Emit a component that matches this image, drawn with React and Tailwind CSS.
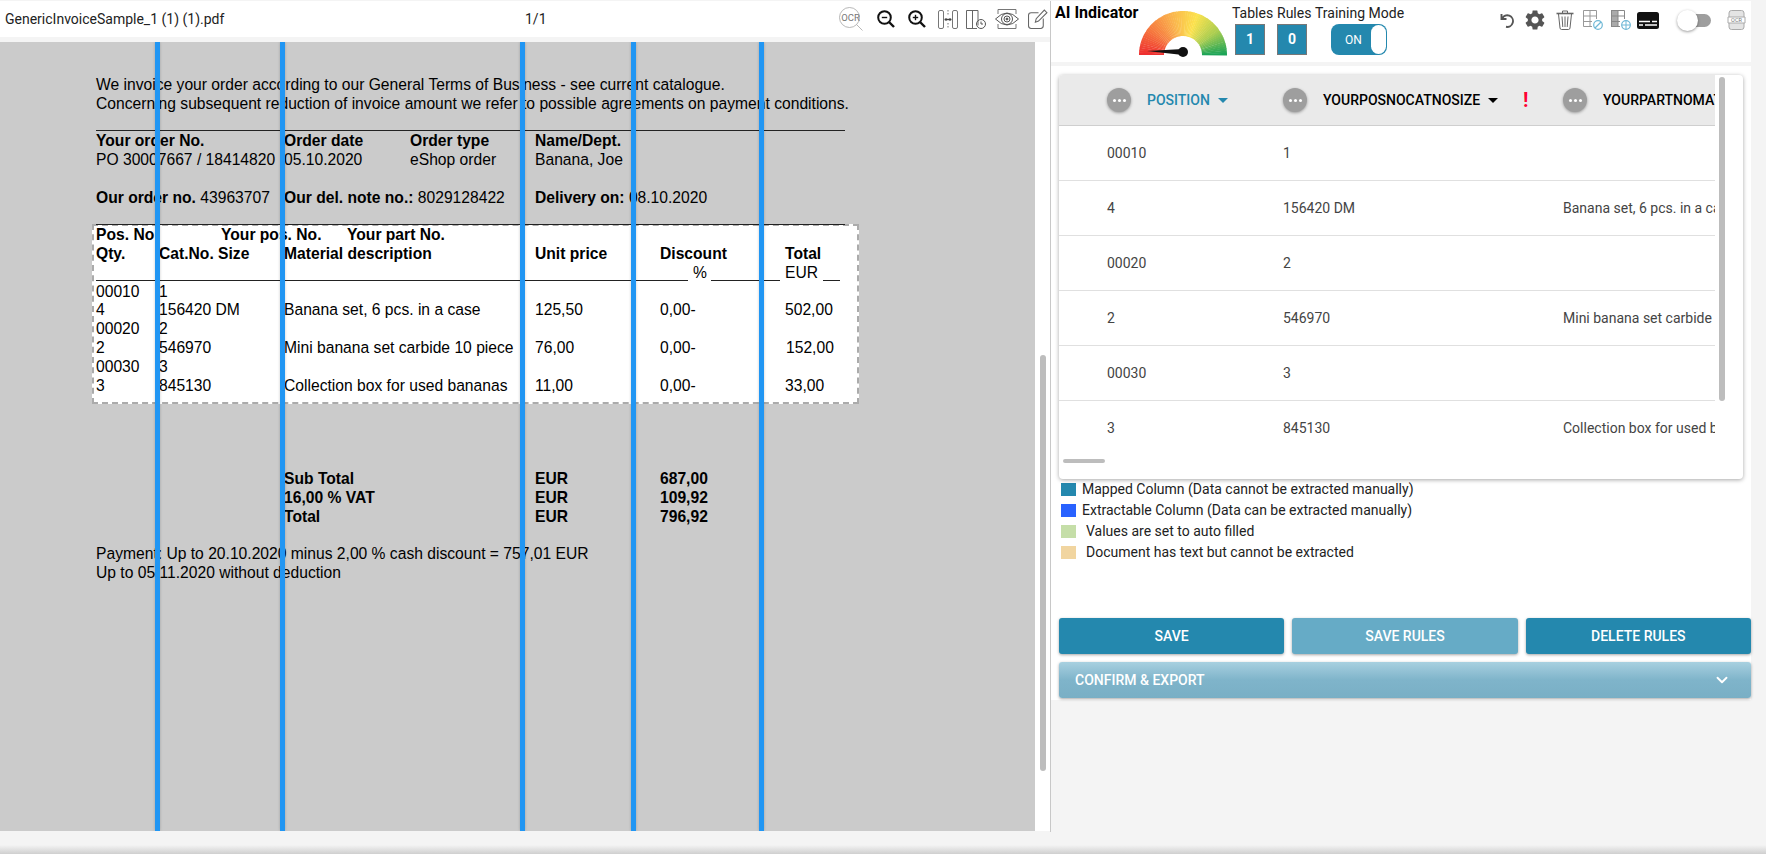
import { ChevronDown } from 'lucide-react';
import { MdSettings } from 'react-icons/md';

const PDF = "font-['Liberation_Sans',Arial,sans-serif]";

// text layer of the pdf page, positions are relative to the page canvas
const pdfText = [
  ['left-[96px] top-[34px]', 'We invoice your order according to our General Terms of Business - see current catalogue.'],
  ['left-[96px] top-[53px]', 'Concerning subsequent reduction of invoice amount we refer to possible agreements on payment conditions.'],
  ['left-[96px] top-[90px] font-bold', 'Your order No.'],
  ['left-[284px] top-[90px] font-bold', 'Order date'],
  ['left-[410px] top-[90px] font-bold', 'Order type'],
  ['left-[535px] top-[90px] font-bold', 'Name/Dept.'],
  ['left-[96px] top-[109px]', 'PO 30007667 / 18414820'],
  ['left-[284px] top-[109px]', '05.10.2020'],
  ['left-[410px] top-[109px]', 'eShop order'],
  ['left-[535px] top-[109px]', 'Banana, Joe'],
  ['left-[96px] top-[147px]', <><b>Our order no.</b> 43963707</>],
  ['left-[284px] top-[147px]', <><b>Our del. note no.:</b> 8029128422</>],
  ['left-[535px] top-[147px]', <><b>Delivery on:</b> 08.10.2020</>],
  ['left-[96px] top-[184px] font-bold', 'Pos. No'],
  ['left-[221px] top-[184px] font-bold', 'Your pos. No.'],
  ['left-[347px] top-[184px] font-bold', 'Your part No.'],
  ['left-[96px] top-[203px] font-bold', 'Qty.'],
  ['left-[159px] top-[203px] font-bold', 'Cat.No. Size'],
  ['left-[284px] top-[203px] font-bold', 'Material description'],
  ['left-[535px] top-[203px] font-bold', 'Unit price'],
  ['left-[660px] top-[203px] font-bold', 'Discount'],
  ['left-[785px] top-[203px] font-bold', 'Total'],
  ['left-[693px] top-[222px]', '%'],
  ['left-[785px] top-[222px]', 'EUR'],
  ['left-[96px] top-[241px]', '00010'],
  ['left-[159px] top-[241px]', '1'],
  ['left-[96px] top-[259px]', '4'],
  ['left-[159px] top-[259px]', '156420 DM'],
  ['left-[284px] top-[259px]', 'Banana set, 6 pcs. in a case'],
  ['left-[535px] top-[259px]', '125,50'],
  ['left-[660px] top-[259px]', '0,00-'],
  ['left-[785px] top-[259px]', '502,00'],
  ['left-[96px] top-[278px]', '00020'],
  ['left-[159px] top-[278px]', '2'],
  ['left-[96px] top-[297px]', '2'],
  ['left-[159px] top-[297px]', '546970'],
  ['left-[284px] top-[297px]', 'Mini banana set carbide 10 piece'],
  ['left-[535px] top-[297px]', '76,00'],
  ['left-[660px] top-[297px]', '0,00-'],
  ['left-[786px] top-[297px]', '152,00'],
  ['left-[96px] top-[316px]', '00030'],
  ['left-[159px] top-[316px]', '3'],
  ['left-[96px] top-[335px]', '3'],
  ['left-[159px] top-[335px]', '845130'],
  ['left-[284px] top-[335px]', 'Collection box for used bananas'],
  ['left-[535px] top-[335px]', '11,00'],
  ['left-[660px] top-[335px]', '0,00-'],
  ['left-[785px] top-[335px]', '33,00'],
  ['left-[284px] top-[428px] font-bold', 'Sub Total'],
  ['left-[535px] top-[428px] font-bold', 'EUR'],
  ['left-[660px] top-[428px] font-bold', '687,00'],
  ['left-[284px] top-[447px] font-bold', '16,00 % VAT'],
  ['left-[535px] top-[447px] font-bold', 'EUR'],
  ['left-[660px] top-[447px] font-bold', '109,92'],
  ['left-[284px] top-[466px] font-bold', 'Total'],
  ['left-[535px] top-[466px] font-bold', 'EUR'],
  ['left-[660px] top-[466px] font-bold', '796,92'],
  ['left-[96px] top-[503px]', 'Payment: Up to 20.10.2020 minus 2,00 % cash discount = 757,01 EUR'],
  ['left-[96px] top-[522px]', 'Up to 05.11.2020 without deduction'],
];

const pdfRules = [
  'left-[96px] top-[88px] w-[749px]',
  'left-[96px] top-[182px] w-[749px]',
  'left-[96px] top-[238px] w-[592px]',
  'left-[711px] top-[238px] w-[69px]',
  'left-[823px] top-[238px] w-[17px]',
];

const columnLines = ['left-[155px]', 'left-[280px]', 'left-[520px]', 'left-[631px]', 'left-[759px]'];

const rows = [
  ['00010', '1', ''],
  ['4', '156420 DM', 'Banana set, 6 pcs. in a case'],
  ['00020', '2', ''],
  ['2', '546970', 'Mini banana set carbide 10 piece'],
  ['00030', '3', ''],
  ['3', '845130', 'Collection box for used bananas'],
];

const legend = [
  ['bg-[#2488ae]', 'ml-[6px]', 'Mapped Column (Data cannot be extracted manually)'],
  ['bg-[#2962ff]', 'ml-[6px]', 'Extractable Column (Data can be extracted manually)'],
  ['bg-[#c5dea8]', 'ml-[10px]', 'Values are set to auto filled'],
  ['bg-[#f1d5a0]', 'ml-[10px]', 'Document has text but cannot be extracted'],
];

function lerp(a, b, t) {
  return a.map((v, i) => Math.round(v + (b[i] - v) * t));
}

const gaugeStops = [[238, 48, 48], [246, 120, 62], [250, 180, 78], [252, 226, 78], [170, 205, 80], [16, 160, 88]];

function Gauge() {
  const n = 60;
  const segs = [];
  for (let i = 0; i < n; i++) {
    const a0 = Math.PI - (Math.PI * i) / n;
    const a1 = Math.PI - (Math.PI * (i + 1.2)) / n;
    const p = (i / n) * (gaugeStops.length - 1);
    const k = Math.floor(p);
    const c = lerp(gaugeStops[k], gaugeStops[Math.min(k + 1, gaugeStops.length - 1)], p - k);
    const pt = (r, a) => `${(44 + r * Math.cos(a)).toFixed(2)} ${(45 - r * Math.sin(a)).toFixed(2)}`;
    segs.push(
      <path key={i} fill={`rgb(${c.join(',')})`}
        d={`M${pt(44, a0)} A44 44 0 0 1 ${pt(44, a1)} L${pt(19, a1)} A19 19 0 0 0 ${pt(19, a0)} Z`} />
    );
  }
  return (
    <svg width="88" height="48" viewBox="0 0 88 48" className="shrink-0">
      {segs}
      <path d="M8 41 L44 39 Q50 42 44 45 Z" fill="#111" />
      <circle cx="44" cy="42" r="5" fill="#111" />
    </svg>
  );
}

function OcrIcon() {
  return (
    <svg width="24" height="24" viewBox="0 0 24 24" fill="none" stroke="#a5a5a5" strokeWidth="0.8" className="shrink-0">
      <circle cx="10.5" cy="10.5" r="10" />
      <path d="M17.5 17.5 L23.5 23.5" />
      <text x="11.5" y="13.5" textAnchor="middle" fontSize="9.5" fill="#777" stroke="none" fontFamily="Roboto, sans-serif">OCR</text>
    </svg>
  );
}

function Lens({ plus }) {
  return (
    <svg width="18" height="18" viewBox="0 0 18 18" fill="none" stroke="#111" strokeWidth="2" className="shrink-0">
      <circle cx="7.5" cy="7.5" r="6.3" />
      <path d="M12 12 L17 17" strokeWidth="2.4" />
      <path d="M4.8 7.5 H10.2" strokeWidth="1.4" />
      {plus && <path d="M7.5 4.8 V10.2" strokeWidth="1.4" />}
    </svg>
  );
}

function ColWidthIcon() {
  return (
    <svg width="20" height="19" viewBox="0 0 20 19" fill="none" stroke="#777" strokeWidth="1" className="shrink-0">
      <rect x="0.5" y="0.5" width="5" height="18" rx="1.5" />
      <rect x="14.5" y="0.5" width="5" height="18" rx="1.5" />
      <path d="M10 0 V6 M10 13 V19" strokeDasharray="1.5 1.5" />
      <path d="M6.5 9.5 H13.5" stroke="#444" strokeWidth="1.4" />
      <path d="M8 8 V11 M12 8 V11" stroke="#444" />
    </svg>
  );
}

function ColClockIcon() {
  return (
    <svg width="20" height="19" viewBox="0 0 20 19" fill="none" stroke="#666" strokeWidth="1" className="shrink-0">
      <path d="M12 15.5 V0.5 H0.5 V18.5 H11" />
      <path d="M6.5 0.5 V18.5" />
      <circle cx="15" cy="14" r="4.5" stroke="#555" />
      <path d="M15 11.5 V14 H17" stroke="#555" />
    </svg>
  );
}

function EyeIcon() {
  return (
    <svg width="24" height="20" viewBox="0 0 24 20" fill="none" stroke="#555" strokeWidth="1" className="shrink-0">
      <path d="M3 0.5 H21 M3 19.5 H21 M3 0.5 V5 M21 0.5 V5 M3 15 V19.5 M21 15 V19.5" stroke="#777" />
      <path d="M0.5 10 Q12 -2 23.5 10 Q12 22 0.5 10 Z" fill="#fff" />
      <circle cx="12" cy="10" r="5.5" />
      <circle cx="12" cy="10" r="3" />
      <circle cx="12" cy="10" r="1" fill="#555" />
    </svg>
  );
}

function EditIcon() {
  return (
    <svg width="20" height="20" viewBox="0 0 19 19" fill="none" stroke="#666" strokeWidth="1" className="shrink-0">
      <path d="M10 3.5 H3 Q0.5 3.5 0.5 6 V16 Q0.5 18.5 3 18.5 H12 Q14.5 18.5 14.5 16 V9" />
      <path d="M7 12.5 L7.8 9.2 L15.5 1 L18 3.5 L10 11.5 Z" />
    </svg>
  );
}

function UndoIcon() {
  return (
    <svg width="15" height="15" viewBox="0 0 15 15" fill="none" stroke="#555" strokeWidth="1.9" className="shrink-0">
      <path d="M1.5 1 V6 H6.5" />
      <path d="M2 5.5 A5.8 5.8 0 1 1 6 13.8" />
    </svg>
  );
}

function TrashIcon() {
  return (
    <svg width="18" height="20" viewBox="0 0 18 20" fill="none" stroke="#666" strokeWidth="1" className="shrink-0">
      <path d="M0.5 3.5 H17.5" strokeWidth="1.6" />
      <path d="M6.5 3 V1 H11.5 V3" />
      <path d="M2.5 4 L4 18 Q4.2 19.5 5.5 19.5 H12.5 Q13.8 19.5 14 18 L15.5 4" />
      <path d="M6 6.5 L6.8 17 M9 6.5 V17 M12 6.5 L11.2 17" />
    </svg>
  );
}

function TableBanIcon() {
  return (
    <svg width="20" height="20" viewBox="0 0 20 20" fill="none" stroke="#999" strokeWidth="1" className="shrink-0">
      <path d="M0.5 0.5 H13.5 V9 M0.5 0.5 V16.5 H9 M0.5 6 H13.5 M0.5 11.5 H9 M7 0.5 V16.5" />
      <circle cx="15" cy="15" r="4.3" stroke="#6fb8d6" strokeWidth="1.2" />
      <path d="M12 18 L18 12" stroke="#6fb8d6" strokeWidth="1.2" />
    </svg>
  );
}

function TablePlusIcon() {
  return (
    <svg width="20" height="20" viewBox="0 0 20 20" fill="none" stroke="#888" strokeWidth="1" className="shrink-0">
      <rect x="0.5" y="0.5" width="6.5" height="16" fill="#aaa" />
      <path d="M7 0.5 H13.5 V9 M7 6 H13.5 M0.5 6 H7 M0.5 11.5 H9 M7 16.5 H9" />
      <circle cx="15" cy="15" r="4.3" stroke="#6fb8d6" strokeWidth="1.2" />
      <path d="M10.7 15 H19.3 M15 10.7 V19.3" stroke="#6fb8d6" />
    </svg>
  );
}

function CaptionIcon() {
  return (
    <svg width="22" height="17" viewBox="0 0 22 17" className="shrink-0">
      <rect width="22" height="17" rx="2.5" fill="#111" />
      <path d="M2 9.5 H13 M15 9.5 H20 M2 13 H6 M8 13 H20" stroke="#fff" strokeWidth="1.6" />
    </svg>
  );
}

function OcrBoxIcon() {
  return (
    <svg width="19" height="20" viewBox="0 0 18 20" fill="none" stroke="#aaa" strokeWidth="1" className="shrink-0">
      <rect x="1.5" y="0.5" width="15" height="19" rx="2.5" fill="#e4e4e4" />
      <path d="M0.5 7 H17.5 V13 H0.5 Z" fill="#fff" />
      <text x="9" y="12" textAnchor="middle" fontSize="5.5" fill="#777" stroke="none" fontFamily="Roboto, sans-serif">OCR</text>
    </svg>
  );
}

function Caret({ className }) {
  return (
    <svg width="10" height="5" viewBox="0 0 10 5" className={`shrink-0 ${className}`}>
      <path d="M0 0 H10 L5 5 Z" fill="currentColor" />
    </svg>
  );
}

function MenuDot() {
  return (
    <span className="flex h-6 w-6 shrink-0 items-center justify-center gap-[2px] rounded-full bg-[#9e9e9e] shadow-[0_1px_3px_rgba(0,0,0,0.35)]">
      <i className="h-[3px] w-[3px] rounded-full bg-white" />
      <i className="h-[3px] w-[3px] rounded-full bg-white" />
      <i className="h-[3px] w-[3px] rounded-full bg-white" />
    </span>
  );
}

function PdfPanel() {
  return (
    <div className="flex h-[831px] w-[1051px] shrink-0 flex-col border-r border-[#c8c8c8]">
      {/* toolbar */}
      <div className="flex h-9 items-center bg-white text-[14px] text-[#222]">
        <span className="w-[524px] shrink-0 pl-[5px]">GenericInvoiceSample_1 (1) (1).pdf</span>
        <span className="w-[315px] shrink-0 pl-px">1/1</span>
        <OcrIcon />
        <span className="ml-[14px]"><Lens /></span>
        <span className="ml-[13px]"><Lens plus /></span>
        <span className="ml-3"><ColWidthIcon /></span>
        <span className="ml-2"><ColClockIcon /></span>
        <span className="ml-[9px]"><EyeIcon /></span>
        <span className="ml-[9px]"><EditIcon /></span>
      </div>
      <div className="mt-[5px] flex h-[789px]">
        <div className={`relative h-full w-[1035px] shrink-0 overflow-hidden bg-[#cbcbcb] text-[15.65px] leading-[18px] text-black ${PDF}`}>
          <div className="absolute left-[92px] top-[182px] h-[180px] w-[767px] border-2 border-dashed border-[#ababab] bg-white" />
          {pdfRules.map((r) => <div key={r} className={`absolute h-px bg-[#222] ${r}`} />)}
          {pdfText.map(([pos, t], i) => (
            <span key={i} className={`absolute whitespace-nowrap ${pos}`}>{t}</span>
          ))}
          {columnLines.map((c) => (
            <div key={c} className={`absolute top-0 h-full w-[5px] bg-[#2196f3] shadow-[0_0_3px_rgba(0,0,0,0.2)] ${c}`} />
          ))}
        </div>
        <div className="flex-1 bg-white pl-[5px]">
          <div className="mt-[313px] h-[416px] w-[6px] rounded-full bg-[#bdbdbd]" />
        </div>
      </div>
    </div>
  );
}

function RightHeader() {
  return (
    <div className="flex h-[61px] w-[700px] items-start bg-white pl-1 text-[14px] text-[#222]">
      <span className="w-[84px] shrink-0 whitespace-nowrap text-[16px] font-bold leading-6 text-black">AI Indicator</span>
      <div className="mt-[9px] shrink-0"><Gauge /></div>
      <div className="ml-[5px] flex shrink-0 flex-col">
        <div className="flex h-[23px] items-center whitespace-nowrap leading-6">
          <span className="w-[45px]">Tables</span>
          <span className="w-[38px]">Rules</span>
          <span>Training Mode</span>
        </div>
        <div className="flex">
          <span className="ml-[3px] flex h-[31px] w-[30px] items-center justify-center border border-[#777] bg-[#2488ae] font-bold text-white">1</span>
          <span className="ml-3 flex h-[31px] w-[30px] items-center justify-center border border-[#777] bg-[#2488ae] font-bold text-white">0</span>
          <span className="ml-6 flex h-[31px] w-[56px] items-center justify-between rounded-lg bg-[#2488ae] pl-[14px] pr-px text-[12px] text-white">
            ON
            <i className="h-[29px] w-[15px] rounded-full bg-white" />
          </span>
        </div>
      </div>
      <div className="ml-[96px] mt-2 flex h-[22px] shrink-0 items-center">
        <UndoIcon />
        <MdSettings className="ml-[8px] shrink-0 text-[#555]" size={24} />
        <span className="ml-[9px]"><TrashIcon /></span>
        <span className="ml-[9px]"><TableBanIcon /></span>
        <span className="ml-2"><TablePlusIcon /></span>
        <span className="ml-[6px]"><CaptionIcon /></span>
        <div className="relative ml-[28px] h-[13px] w-6 shrink-0 rounded-full bg-[#9e9e9e]">
          <span className="absolute -left-[10px] -top-1 h-[21px] w-[21px] rounded-full bg-white shadow-[0_1px_3px_rgba(0,0,0,0.4)]" />
        </div>
        <span className="ml-[16px]"><OcrBoxIcon /></span>
      </div>
    </div>
  );
}

function MappingTable() {
  return (
    <div className="relative mt-[9px] flex h-[404px] w-[684px] flex-col overflow-hidden rounded bg-white text-[14px] shadow-[0_1px_4px_rgba(0,0,0,0.35)]">
      <div className="w-[656px] overflow-hidden">
        <div className="flex h-[51px] w-[800px] items-center border-b border-[#cfcfcf] bg-[#eaeaea] pl-12 font-medium">
          <div className="flex w-[176px] shrink-0 items-center">
            <MenuDot />
            <span className="ml-4 text-[#2488ae]">POSITION</span>
            <Caret className="ml-2 text-[#2488ae]" />
          </div>
          <div className="flex w-[280px] shrink-0 items-center text-black">
            <MenuDot />
            <span className="ml-4">YOURPOSNOCATNOSIZE</span>
            <Caret className="ml-2" />
            <span className="ml-[25px] text-[20px] font-bold leading-none text-[#ff0033]">!</span>
          </div>
          <div className="flex items-center text-black">
            <MenuDot />
            <span className="ml-4 whitespace-nowrap">YOURPARTNOMATERIAL</span>
          </div>
        </div>
        {rows.map((r, i) => (
          <div key={i} className="flex h-[55px] w-[800px] items-center border-b border-[#e0e0e0] pl-12 text-[#444] last:border-b-0">
            <span className="w-[176px] shrink-0">{r[0]}</span>
            <span className="w-[280px] shrink-0">{r[1]}</span>
            <span className="whitespace-nowrap">{r[2]}</span>
          </div>
        ))}
      </div>
      <div className="absolute right-[18px] top-[2px] h-[324px] w-[6px] rounded-full bg-[#bdbdbd]" />
      <div className="absolute bottom-[16px] left-[4px] h-1 w-[42px] rounded-full bg-[#bdbdbd]" />
    </div>
  );
}

function RightPanel() {
  return (
    <div className="flex flex-col font-['Roboto',sans-serif]">
      <RightHeader />
      <div className="mt-1 h-[634px] w-[700px] bg-white pl-2">
        <MappingTable />
        <div className="ml-[2px] flex flex-col text-[14px] text-[#222]">
          {legend.map(([swatch, gap, label]) => (
            <div key={label} className="flex h-[21px] items-center">
              <i className={`h-[13px] w-[15px] shrink-0 ${swatch}`} />
              <span className={gap}>{label}</span>
            </div>
          ))}
        </div>
        <div className="mt-[55px] flex w-[692px] gap-2 text-[14px] font-medium text-white">
          <button className="h-9 flex-1 rounded-[3px] bg-[#2488ae] shadow-[0_1px_3px_rgba(0,0,0,0.35)]">SAVE</button>
          <button className="h-9 flex-1 rounded-[3px] bg-[#66abc6] shadow-[0_1px_3px_rgba(0,0,0,0.35)]">SAVE RULES</button>
          <button className="h-9 flex-1 rounded-[3px] bg-[#2488ae] shadow-[0_1px_3px_rgba(0,0,0,0.35)]">DELETE RULES</button>
        </div>
        <div className="mt-2 flex h-9 w-[692px] items-center justify-between rounded-[3px] bg-[linear-gradient(#a8d0e0,#7fb4ca_50%,#79afc5)] pl-4 pr-5 text-[14px] font-medium text-white shadow-[0_1px_3px_rgba(0,0,0,0.35)]">
          CONFIRM &amp; EXPORT
          <ChevronDown size={18} strokeWidth={2.5} />
        </div>
      </div>
    </div>
  );
}

export default function App() {
  return (
    <div className="flex h-[854px] w-full flex-col overflow-hidden bg-[#f4f4f4] pt-px font-['Roboto',sans-serif]">
      <div className="flex">
        <PdfPanel />
        <RightPanel />
      </div>
      <div className="mt-[13px] h-[9px] bg-[linear-gradient(#f4f4f4,#cfcfcf)]" />
    </div>
  );
}
